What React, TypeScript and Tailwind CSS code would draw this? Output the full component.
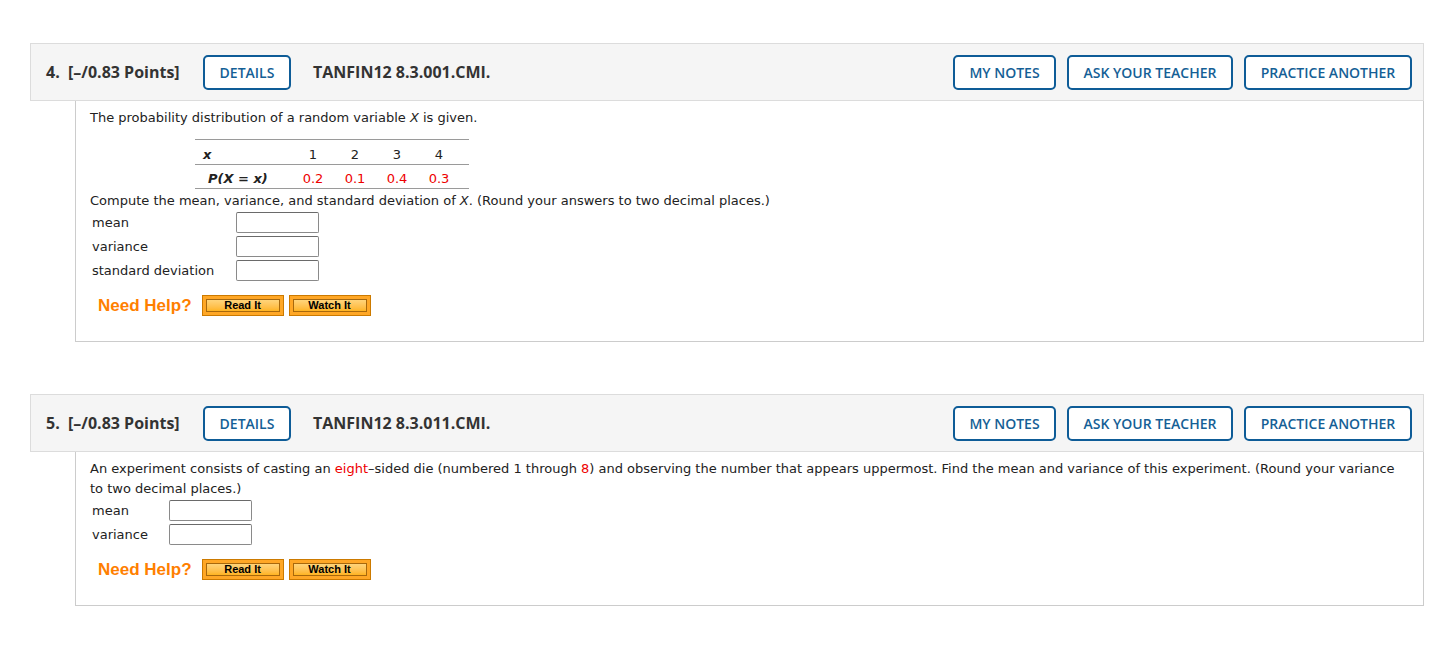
const BTN =
  "h-[35px] border-2 border-[#0e5c97] rounded-[5px] text-[14px] font-semibold text-[#155f96] bg-white flex items-center justify-center";

const Header = ({ num, code }: { num: number; code: string }) => (
  <div className="h-[58px] bg-[#f5f5f5] border border-[#dcdcdc] flex items-center pl-[15px] pr-[11px] font-['Open_Sans',sans-serif]">
    <span className="text-[16px] font-bold text-[#333] w-[157px] whitespace-nowrap">
      {num}.&nbsp; [–/0.83 Points]
    </span>
    <button className={BTN + " w-[88px]"}>DETAILS</button>
    <span className="ml-[22px] text-[16px] font-bold text-[#333]">{code}</span>
    <div className="ml-auto flex gap-[11px]">
      <button className={BTN + " w-[103px]"}>MY NOTES</button>
      <button className={BTN + " w-[166px]"}>ASK YOUR TEACHER</button>
      <button className={BTN + " w-[168px]"}>PRACTICE ANOTHER</button>
    </div>
  </div>
);

const Input = () => (
  <div className="w-[83px] h-[21px] border border-[#8a8a8a] border-t-[#6a6a6a] rounded-[2px] bg-white" />
);

const HelpBtn = ({ label }: { label: string }) => (
  <div className="w-[82px] h-[21px] border border-[#cc7a00] bg-[#ffa726] p-[3px] flex">
    <div className="flex-1 border border-[#a8680c] bg-gradient-to-b from-[#ffd47a] to-[#ffb41e] flex items-center justify-center text-[11px] font-bold text-black leading-none font-['Liberation_Sans',Arial,sans-serif]">
      {label}
    </div>
  </div>
);

const NeedHelp = () => (
  <div className="flex items-center ml-[8px] gap-[5px]">
    <span className="text-[17px] font-bold text-[#ff7f00] font-['Liberation_Sans',Arial,sans-serif] mr-[5px]">
      Need Help?
    </span>
    <HelpBtn label="Read It" />
    <HelpBtn label="Watch It" />
  </div>
);

const FormRows = ({ rows, labelW }: { rows: string[]; labelW: string }) => (
  <div className="flex flex-col gap-[3px]">
    {rows.map((r) => (
      <div key={r} className="flex items-center h-[21px]">
        <span className={"pl-[2px] " + labelW}>{r}</span>
        <Input />
      </div>
    ))}
  </div>
);

export default function App() {
  const vals = ["0.2", "0.1", "0.4", "0.3"];
  return (
    <div className="bg-white min-h-[655px] pt-[43px] pl-[30px] pr-[10px] text-[13px] text-[#222] font-['DejaVu_Sans',Verdana,sans-serif]">
      <Header num={4} code="TANFIN12 8.3.001.CMI." />
      <div className="ml-[45px] border border-t-0 border-[#cccccc] pl-[14px] pt-[9px] h-[241px]">
        <p className="leading-[16px]">
          The probability distribution of a random variable <i>X</i> is given.
        </p>
        <div className="ml-[105px] mt-[13px] w-[274px] border-t border-b border-[#9a9a9a]">
          <div className="flex h-[25px] items-end border-b border-[#9a9a9a]">
            <span className="w-[97px] pl-[8px] font-bold italic">x</span>
            {[1, 2, 3, 4].map((n) => (
              <span key={n} className="w-[42px] text-center">{n}</span>
            ))}
          </div>
          <div className="flex h-[23px] items-end">
            <span className="w-[97px] pl-[13px] font-bold italic">P(X = x)</span>
            {vals.map((v) => (
              <span key={v} className="w-[42px] text-center text-[#ee0000]">{v}</span>
            ))}
          </div>
        </div>
        <p className="leading-[16px] mt-[4px]">
          Compute the mean, variance, and standard deviation of <i>X</i>. (Round your answers to two decimal places.)
        </p>
        <div className="mt-[3px]">
          <FormRows rows={["mean", "variance", "standard deviation"]} labelW="w-[146px]" />
        </div>
        <div className="mt-[12px]">
          <NeedHelp />
        </div>
      </div>

      <div className="h-[52px]" />

      <Header num={5} code="TANFIN12 8.3.011.CMI." />
      <div className="ml-[45px] border border-t-0 border-[#cccccc] pl-[14px] pr-[14px] pt-[7px] h-[154px]">
        <p className="leading-[20px]">
          An experiment consists of casting an <span className="text-[#ee0000]">eight</span>–sided die (numbered 1 through{" "}
          <span className="text-[#ee0000]">8</span>) and observing the number that appears uppermost. Find the mean and variance of this experiment. (Round your variance to two decimal places.)
        </p>
        <div className="mt-[1px]">
          <FormRows rows={["mean", "variance"]} labelW="w-[79px]" />
        </div>
        <div className="mt-[12px]">
          <NeedHelp />
        </div>
      </div>
    </div>
  );
}
